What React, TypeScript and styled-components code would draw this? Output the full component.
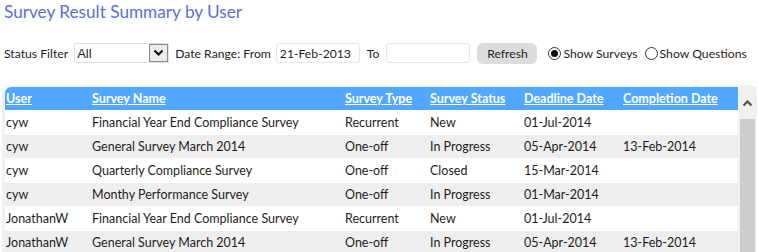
import React from 'react';
import styled, { createGlobalStyle } from 'styled-components';

const GlobalStyle = createGlobalStyle`
  body {
    margin: 0;
    background: #fff;
    font-family: Lato, "Open Sans", sans-serif;
    font-size: 12.5px;
    color: #1e1e1e;
  }
`;

const Page = styled.div`
  width: 758px;
  height: 252px;
  overflow: hidden;
  padding: 0 2px;
  box-sizing: border-box;
`;

const Title = styled.h1`
  margin: 0;
  padding: 1px 2px 0;
  height: 24px;
  font-size: 17.2px;
  font-weight: normal;
  color: #5a6fdc;
  line-height: 22px;
`;

const Toolbar = styled.div`
  display: flex;
  align-items: center;
  height: 22px;
  margin-top: 17px;
  padding-left: 2px;
  white-space: nowrap;
  font-size: 12.2px;
`;

const Label = styled.span<{ $gap?: number }>`
  margin-right: ${(p) => p.$gap ?? 6}px;
`;

const Select = styled.div`
  display: flex;
  align-items: center;
  width: 95px;
  height: 20px;
  box-sizing: border-box;
  border: 1px solid #e2e2e2;
  margin-right: 6px;
  font-family: "Liberation Sans", Arial, sans-serif;
  font-size: 13px;
`;

const SelectValue = styled.span`
  flex: 1;
  padding-left: 2px;
`;

const SelectButton = styled.span`
  display: flex;
  align-items: center;
  justify-content: center;
  width: 19px;
  height: 18px;
  box-sizing: border-box;
  border: 1px solid #8a8a8a;
  background: #ececec;
`;

const TextInput = styled.div<{ $gap?: number }>`
  width: 84px;
  height: 20px;
  box-sizing: border-box;
  border: 1px solid #e6e6e6;
  border-radius: 3px;
  padding: 1px 3px;
  line-height: 17px;
  margin-right: ${(p) => p.$gap ?? 7}px;
`;

const Button = styled.button`
  font: inherit;
  color: #222;
  height: 21px;
  width: 60px;
  border: none;
  border-radius: 6px;
  background: #dcdcdc;
  padding: 0;
  margin-right: 11px;
`;

const Radio = styled.span<{ $checked?: boolean }>`
  display: inline-flex;
  align-items: center;
  justify-content: center;
  width: 13px;
  height: 13px;
  box-sizing: border-box;
  border: 1px solid #333;
  border-radius: 50%;
  margin-right: 2px;
  &::after {
    content: '';
    display: ${(p) => (p.$checked ? 'block' : 'none')};
    width: 7px;
    height: 7px;
    border-radius: 50%;
    background: #111;
  }
`;

const RadioLabel = styled.label`
  display: inline-flex;
  align-items: center;
  margin-right: 7px;
`;

const Panel = styled.div`
  display: flex;
  margin-top: 21px;
  width: 755px;
  box-sizing: border-box;
  background: #f2f2f2;
  border-radius: 8px 8px 0 0;
  padding: 2px 0 0 3px;
`;

const Table = styled.table`
  width: 733px;
  flex: none;
  border-collapse: collapse;
  table-layout: fixed;
  background: #fff;
`;

const HeadCell = styled.th<{ $w: number }>`
  width: ${(p) => p.$w}px;
  height: 23px;
  padding: 0 0 0 1px;
  background: #52a8ff;
  color: #fff;
  font-weight: bold;
  text-align: left;
  text-decoration: underline;
  &:first-child {
    border-top-left-radius: 6px;
  }
`;

const Row = styled.tr<{ $alt: boolean }>`
  background: ${(p) => (p.$alt ? '#eeeeee' : '#fff')};
  border-top: 1px solid #fff;
`;

const Cell = styled.td`
  height: 23px;
  padding: 0 0 0 1px;
  white-space: nowrap;
`;

const Scrollbar = styled.div`
  display: flex;
  flex-direction: column;
  width: 17px;
  margin-left: 1px;
  background: #f0f0f0;
`;

const ScrollArrow = styled.div`
  height: 32px;
  display: flex;
  align-items: center;
  justify-content: center;
`;

const ScrollThumb = styled.div`
  flex: 1;
  margin: 0 1px;
  background: #cdcdcd;
`;

const columns = [
  { title: 'User', w: 85 },
  { title: 'Survey Name', w: 252 },
  { title: 'Survey Type', w: 84 },
  { title: 'Survey Status', w: 93 },
  { title: 'Deadline Date', w: 98 },
  { title: 'Completion Date', w: 115 },
];

const rows = [
  ['cyw', 'Financial Year End Compliance Survey', 'Recurrent', 'New', '01-Jul-2014', ''],
  ['cyw', 'General Survey March 2014', 'One-off', 'In Progress', '05-Apr-2014', '13-Feb-2014'],
  ['cyw', 'Quarterly Compliance Survey', 'One-off', 'Closed', '15-Mar-2014', ''],
  ['cyw', 'Monthy Performance Survey', 'One-off', 'In Progress', '01-Mar-2014', ''],
  ['JonathanW', 'Financial Year End Compliance Survey', 'Recurrent', 'New', '01-Jul-2014', ''],
  ['JonathanW', 'General Survey March 2014', 'One-off', 'In Progress', '05-Apr-2014', '13-Feb-2014'],
];

const App: React.FC = function() {
  return (
    <Page>
      <GlobalStyle />
      <Title>Survey Result Summary by User</Title>
      <Toolbar>
        <Label $gap={6}>Status Filter</Label>
        <Select>
          <SelectValue>All</SelectValue>
          <SelectButton>
            <svg width="11" height="8" viewBox="0 0 11 8">
              <path d="M1.5 1.5 L5.5 5.5 L9.5 1.5" fill="none" stroke="#111" strokeWidth="2.2" />
            </svg>
          </SelectButton>
        </Select>
        <Label $gap={5}>Date Range: From</Label>
        <TextInput>21-Feb-2013</TextInput>
        <Label $gap={7}>To</Label>
        <TextInput $gap={7} />
        <Button>Refresh</Button>
        <RadioLabel>
          <Radio $checked />
          Show Surveys
        </RadioLabel>
        <RadioLabel>
          <Radio />
          Show Questions
        </RadioLabel>
      </Toolbar>
      <Panel>
        <Table>
          <thead>
            <tr>
              {columns.map((c) => (
                <HeadCell key={c.title} $w={c.w}>{c.title}</HeadCell>
              ))}
            </tr>
          </thead>
          <tbody>
            {rows.map((r, i) => (
              <Row key={i} $alt={i % 2 === 1}>
                {r.map((v, j) => (
                  <Cell key={j}>{v}</Cell>
                ))}
              </Row>
            ))}
          </tbody>
        </Table>
        <Scrollbar>
          <ScrollArrow>
            <svg width="11" height="7" viewBox="0 0 11 7">
              <path d="M1.5 5.5 L5.5 1.5 L9.5 5.5" fill="none" stroke="#555" strokeWidth="2.2" />
            </svg>
          </ScrollArrow>
          <ScrollThumb />
        </Scrollbar>
      </Panel>
    </Page>
  );
};

export default App;
